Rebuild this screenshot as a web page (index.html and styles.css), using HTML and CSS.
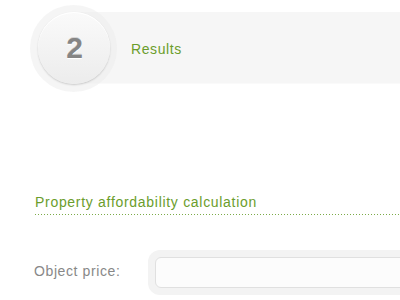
FILE: index.html
```html
<!DOCTYPE html>
<html>
<head>
<meta charset="utf-8">
<link rel="stylesheet" href="styles.css">
</head>
<body>
<div class="steps">
  <div class="step-bar">
    <span class="step-title">Results</span>
  </div>
  <div class="step-badge"><div class="step-disc"><span class="step-num">2</span></div></div>
</div>
<div class="section">
  <h2 class="section-title">Property affordability calculation</h2>
  <div class="field-row">
    <label class="field-label">Object price:</label>
    <div class="field-halo"><input class="field-input" type="text"></div>
  </div>
</div>
</body>
</html>
```
FILE: styles.css
```css
html, body {
  margin: 0;
  padding: 0;
  background: #ffffff;
  font-family: "Liberation Sans", Arial, sans-serif;
  overflow: hidden;
}

.steps {
  position: relative;
  height: 83px;
  padding-top: 12px;
}

.step-bar {
  margin-left: 73px;
  height: 71px;
  background: #f6f6f6;
  display: flex;
  align-items: center;
  padding-left: 58px;
  box-shadow: 0 1px 1px rgba(0, 0, 0, 0.02);
}

.step-title {
  color: #6b9d2c;
  font-size: 14px;
  letter-spacing: 0.6px;
  line-height: 18px;
  padding-top: 3px;
}

.step-badge {
  position: absolute;
  left: 30px;
  top: 5px;
  width: 87px;
  height: 87px;
  border-radius: 50%;
  background: rgba(236, 236, 236, 0.55);
  display: flex;
  align-items: center;
  justify-content: center;
}

.step-disc {
  width: 72px;
  height: 72px;
  border-radius: 50%;
  background: linear-gradient(#fafafa, #ececec);
  box-shadow: 0 1px 2px rgba(0, 0, 0, 0.18), inset 0 1px 0 #ffffff;
  display: flex;
  align-items: center;
  justify-content: center;
  margin-top: -2px;
}

.step-num {
  font-size: 30px;
  font-weight: bold;
  color: #858585;
  line-height: 30px;
  margin-left: 2px;
  margin-top: 1px;
  text-shadow: 0 1px 0 #ffffff, 0 -1px 0 rgba(0, 0, 0, 0.15);
}

.section {
  padding-left: 34px;
}

.section-title {
  margin: 98px 0 0 0;
  font-size: 14px;
  font-weight: normal;
  line-height: 18px;
  letter-spacing: 0.7px;
  color: #6b9d2c;
  padding-bottom: 4px;
  padding-left: 1px;
  background-image: linear-gradient(to right, #7cab48 1px, transparent 1px);
  background-size: 3px 1px;
  background-repeat: repeat-x;
  background-position: 1px bottom;
}

.field-row {
  margin-top: 35px;
  display: flex;
  align-items: center;
}

.field-label {
  width: 114px;
  flex: none;
  font-size: 14px;
  line-height: 18px;
  letter-spacing: 0.6px;
  color: #888888;
  margin-top: -3px;
}

.field-halo {
  flex: 1;
  padding: 7px;
  background: #f3f3f3;
  border-radius: 12px;
  margin-right: -20px;
}

.field-input {
  display: block;
  box-sizing: border-box;
  width: 100%;
  height: 31px;
  margin: 0;
  border: 1px solid #e0e0e0;
  border-radius: 6px;
  background: #fcfcfc;
  outline: none;
  padding: 0 8px;
}
```
